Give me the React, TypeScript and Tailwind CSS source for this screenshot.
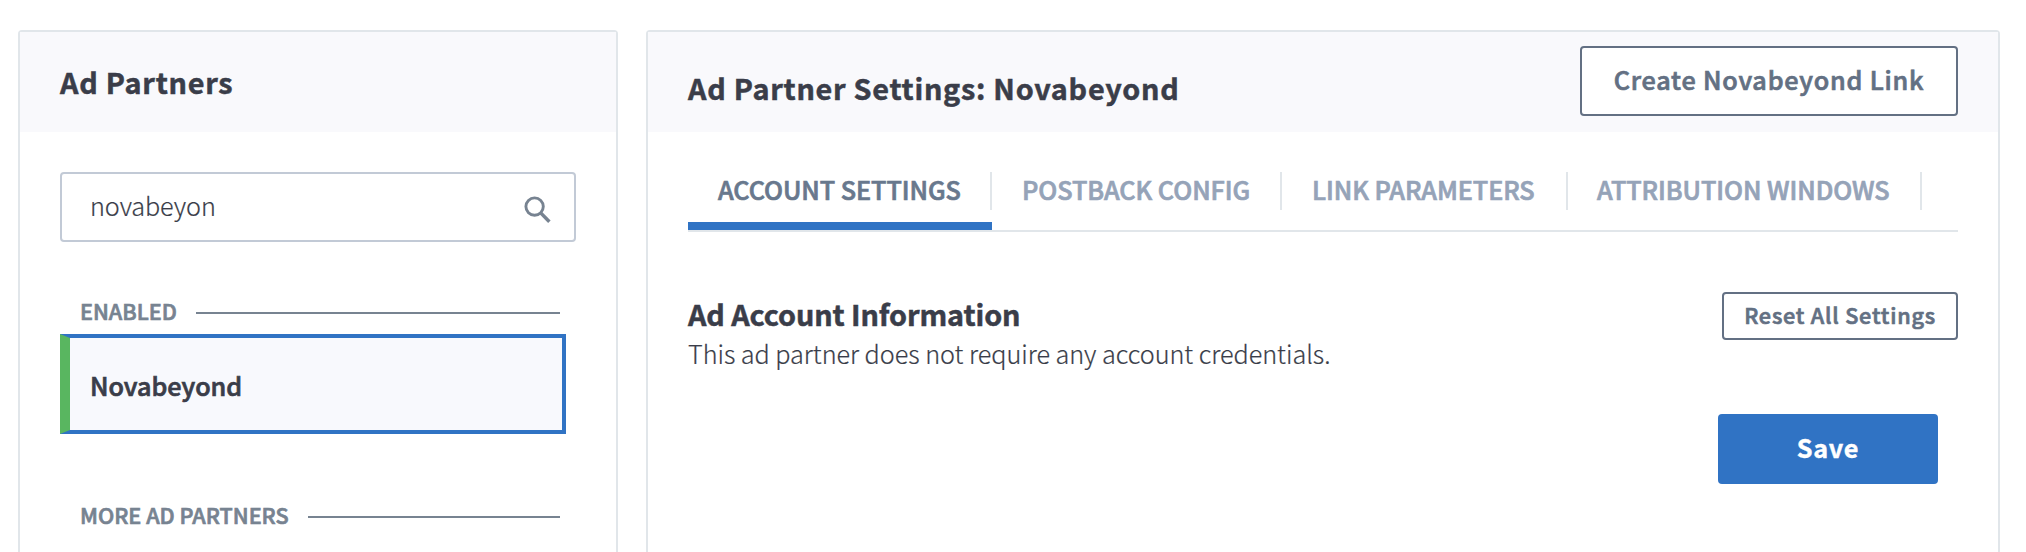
const tabs = [
  { label: "ACCOUNT SETTINGS", width: "w-[304px]", pad: "pl-[30px]", active: true },
  { label: "POSTBACK CONFIG", width: "w-[290px]", pad: "pl-[30px]", active: false },
  { label: "LINK PARAMETERS", width: "w-[286px]", pad: "pl-[30px]", active: false },
  { label: "ATTRIBUTION WINDOWS", width: "w-[354px]", pad: "pl-[29px]", active: false },
];

function SearchIcon() {
  return (
    <svg className="h-7 w-7" viewBox="0 0 28 28" fill="none" stroke="#778391">
      <circle cx="10.6" cy="10.6" r="8.7" strokeWidth="2.9" />
      <path d="M16.2 16.4 L25.4 25.8" strokeWidth="3.5" />
    </svg>
  );
}

function SectionLabel({ children }: { children: string }) {
  return (
    <div className="flex h-8 items-center pl-5 pr-[14px]">
      <span className="text-[21.6px] font-medium leading-8 text-[#778391] [-webkit-text-stroke:0.7px]">
        {children}
      </span>
      <span className="relative top-[2px] ml-[19px] h-[2px] flex-1 bg-[#778391]" />
    </div>
  );
}

function PartnersPanel() {
  return (
    <aside className="flex w-[600px] flex-col rounded-t-[4px] border-2 border-b-0 border-[#e1e6ea] bg-white">
      <header className="flex h-[100px] items-center bg-[#f9f9fc] pl-10">
        <h2 className="pb-px text-[28.8px] font-bold leading-10 tracking-[0.75px] text-[#3a3d49] [-webkit-text-stroke:0.5px]">
          Ad Partners
        </h2>
      </header>
      <div className="flex flex-col px-10 pt-10">
        <div className="flex h-[70px] w-[516px] items-center justify-between rounded-[4px] border-2 border-[#c2cad6] pl-7 pr-[22px]">
          <span className="pb-1 text-[25.2px] font-light leading-9 tracking-[-0.1px] text-[#3a3d49] [-webkit-text-stroke:0.2px]">
            novabeyon
          </span>
          <span className="mt-[5px]">
            <SearchIcon />
          </span>
        </div>
        <div className="mt-[53px] w-[514px]">
          <SectionLabel>ENABLED</SectionLabel>
        </div>
        <div className="mt-[7px] flex h-[100px] w-[506px] items-center border-4 border-l-[10px] border-[#3073c4] border-l-[#59b660] bg-[#f8f9fd] pl-5">
          <span className="pt-[2px] text-[25.2px] font-medium leading-9 text-[#3a3d49] [-webkit-text-stroke:0.7px]">
            Novabeyond
          </span>
        </div>
        <div className="mt-[65px] w-[514px]">
          <SectionLabel>MORE AD PARTNERS</SectionLabel>
        </div>
      </div>
    </aside>
  );
}

function SettingsPanel() {
  return (
    <main className="flex w-[1354px] flex-col rounded-t-[4px] border-2 border-b-0 border-[#e1e6ea] bg-white">
      <header className="flex h-[100px] items-start justify-between bg-[#f9f9fc] pl-10 pr-10">
        <h2 className="pt-9 text-[28.8px] font-bold leading-10 tracking-[0.73px] text-[#3a3d49] [-webkit-text-stroke:0.5px]">
          Ad Partner Settings: Novabeyond
        </h2>
        <button className="mt-[14px] h-[70px] w-[378px] rounded-[4px] border-2 border-[#637083] bg-white pb-1 text-[25.2px] font-medium leading-9 tracking-[0.8px] text-[#637083] [-webkit-text-stroke:0.7px]">
          Create Novabeyond Link
        </button>
      </header>
      <div className="flex flex-col px-10 pt-10">
        <nav className="flex h-[60px] border-b-2 border-[#e1e6ea]">
          {tabs.map((t) => (
            <div key={t.label} className={`flex flex-col justify-between ${t.width}`}>
              <div
                className={`h-[38px] whitespace-nowrap border-r-2 border-[#e1e6ea] text-[25.2px] font-medium leading-[34px] tracking-[-0.05px] [-webkit-text-stroke:0.7px] ${t.pad} ${t.active ? "text-[#68788d]" : "text-[#95a3b8]"}`}
              >
                {t.label}
              </div>
              {t.active && <div className="h-2 bg-[#3073c4]" />}
            </div>
          ))}
        </nav>
        <section className="flex justify-between pt-[60px]">
          <div className="pt-px">
            <h3 className="text-[28.8px] font-bold leading-[42px] tracking-[-0.1px] text-[#3a3d49] [-webkit-text-stroke:0.5px]">
              Ad Account Information
            </h3>
            <p className="-mb-px text-[25.2px] font-light leading-9 tracking-[-0.03px] text-[#3a3d49] [-webkit-text-stroke:0.2px]">
              This ad partner does not require any account credentials.
            </p>
          </div>
          <button className="h-12 w-[236px] rounded-[4px] border-2 border-[#637083] bg-white pb-[3px] text-[21.6px] font-medium leading-8 tracking-[0.8px] text-[#637083] [-webkit-text-stroke:0.7px]">
            Reset All Settings
          </button>
        </section>
        <div className="mt-11 flex justify-end pr-5">
          <button className="h-[70px] w-[220px] rounded-[4px] bg-[#3073c4] pb-1 text-[25.2px] font-bold leading-9 tracking-[0.7px] text-white [-webkit-text-stroke:0.4px]">
            Save
          </button>
        </div>
      </div>
    </main>
  );
}

export default function App() {
  return (
    <div className="flex h-[552px] w-[2026px] gap-7 overflow-hidden bg-white pl-[18px] pt-[30px] font-['Noto_Sans_CJK_SC',sans-serif]">
      <PartnersPanel />
      <SettingsPanel />
    </div>
  );
}
